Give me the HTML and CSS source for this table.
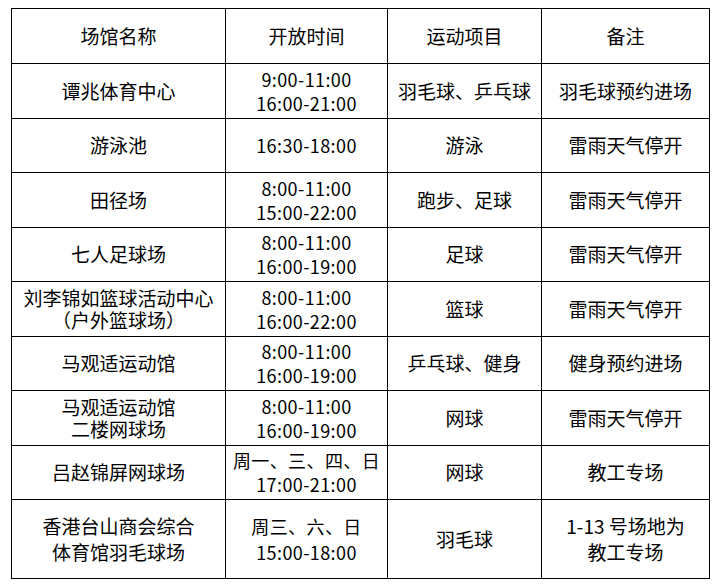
FILE: index.html
```html
<!DOCTYPE html>
<html lang="zh-CN">
<head>
<meta charset="utf-8">
<title>场馆开放时间</title>
<link rel="stylesheet" href="styles.css">
</head>
<body>
<table class="venues">
  <colgroup>
    <col class="c1"><col class="c2"><col class="c3"><col class="c4">
  </colgroup>
  <tr class="head"><td>场馆名称</td><td>开放时间</td><td>运动项目</td><td>备注</td></tr>
  <tr><td>谭兆体育中心</td><td class="num">9:00-11:00<br>16:00-21:00</td><td>羽毛球、乒乓球</td><td>羽毛球预约进场</td></tr>
  <tr><td>游泳池</td><td class="num">16:30-18:00</td><td>游泳</td><td>雷雨天气停开</td></tr>
  <tr><td>田径场</td><td class="num">8:00-11:00<br>15:00-22:00</td><td>跑步、足球</td><td>雷雨天气停开</td></tr>
  <tr><td>七人足球场</td><td class="num">8:00-11:00<br>16:00-19:00</td><td>足球</td><td>雷雨天气停开</td></tr>
  <tr><td class="tight">刘李锦如篮球活动中心<br>（户外篮球场）</td><td class="num">8:00-11:00<br>16:00-22:00</td><td>篮球</td><td>雷雨天气停开</td></tr>
  <tr><td>马观适运动馆</td><td class="num">8:00-11:00<br>16:00-19:00</td><td>乒乓球、健身</td><td>健身预约进场</td></tr>
  <tr><td class="tight">马观适运动馆<br>二楼网球场</td><td class="num">8:00-11:00<br>16:00-19:00</td><td>网球</td><td>雷雨天气停开</td></tr>
  <tr><td>吕赵锦屏网球场</td><td class="num">周一、三、四、日<br>17:00-21:00</td><td>网球</td><td>教工专场</td></tr>
  <tr class="last"><td class="tall">香港台山商会综合<br>体育馆羽毛球场</td><td class="num tall">周三、六、日<br>15:00-18:00</td><td>羽毛球</td><td class="tall">1-13 号场地为<br>教工专场</td></tr>
</table>
</body>
</html>
```

FILE: styles.css
```css
html, body {
  margin: 0;
  padding: 0;
  background: #fff;
}
body {
  padding: 8px 0 0 11px;
  font-family: "Noto Sans CJK SC", "Noto Sans", sans-serif;
  color: #000;
}
.venues {
  border-collapse: collapse;
  table-layout: fixed;
  width: 698px;
  font-size: 19px;
}
.c1 { width: 214px; }
.c2 { width: 162px; }
.c3 { width: 154px; }
.c4 { width: 168px; }
.venues td {
  border: 1px solid #000;
  text-align: center;
  vertical-align: middle;
  padding: 0;
  line-height: 24px;
  height: 53.5px;
}
.venues .head td { height: 54px; }
.venues .num { font-size: 18px; letter-spacing: 0.4px; }
.venues .tight { line-height: 22px; }
.venues .last td { height: 78px; }
.venues .tall { line-height: 26px; }
```
